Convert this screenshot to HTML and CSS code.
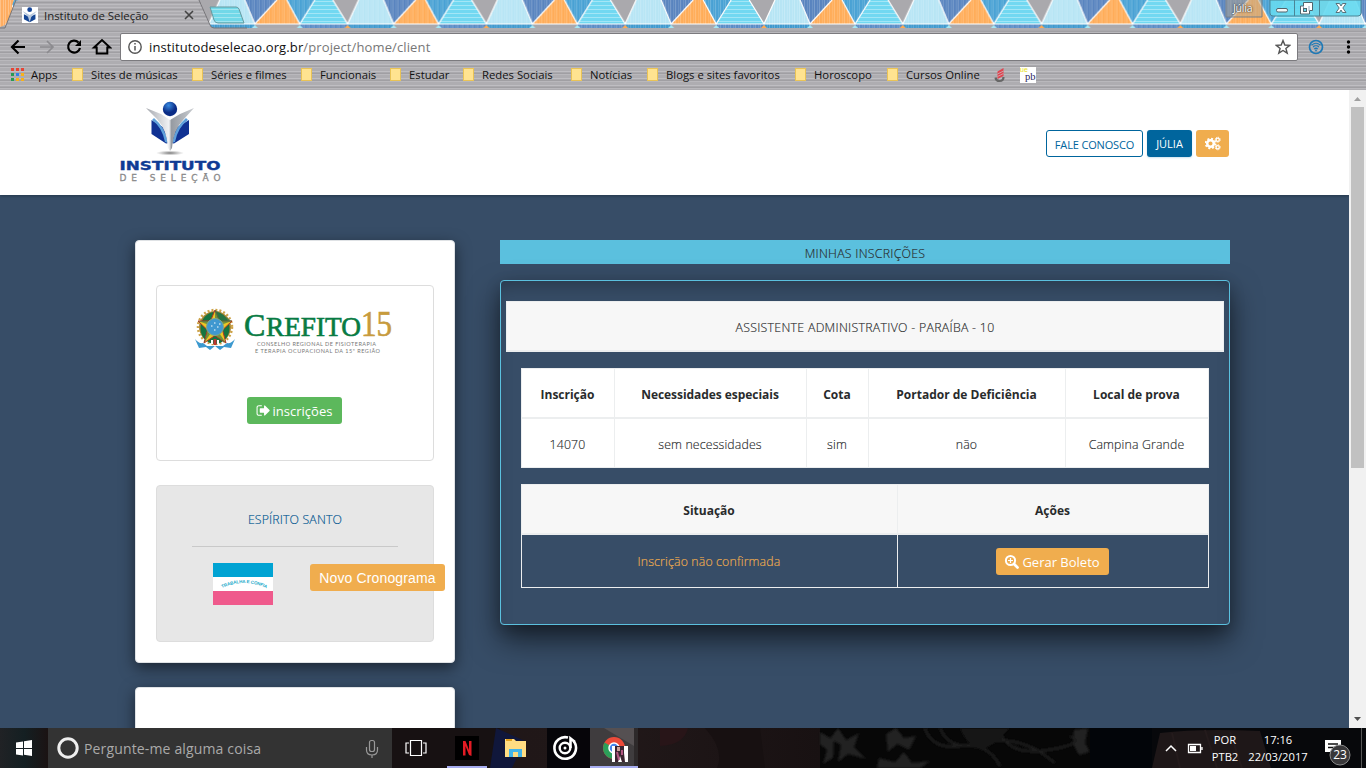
FILE: index.html
```html
<!DOCTYPE html>
<html lang="pt-BR">
<head>
<meta charset="utf-8">
<title>Instituto de Seleção</title>
<link rel="stylesheet" href="styles.css">
</head>
<body>
<header class="browser">
  <div class="titlebar">
    <svg class="theme" width="1366" height="30" viewBox="0 0 1366 30">
      <defs>
        <pattern id="vlines" width="5" height="30" patternUnits="userSpaceOnUse"><path d="M.5 0V30M3.500 0V30" stroke="#fff" stroke-opacity=".25"/></pattern>
        <pattern id="hlines" width="20" height="4" patternUnits="userSpaceOnUse"><path d="M0 1.500H20" stroke="#fff" stroke-opacity=".35"/></pattern>
        <pattern id="tri" x="70" width="138.800" height="28" patternUnits="userSpaceOnUse">
          <path d="M11 0H36L46 24H0Z" fill="#b4e4f4"/><path d="M36 0H68L46 24Z" fill="#527fbc"/>
          <path d="M68 0H78L91 24H46Z" fill="#ffa952"/><path d="M78 0H106L91 24Z" fill="#429ed2"/>
          <path d="M0 24H46V28H0Z" fill="#3795cc"/>
          <path d="M0 0H138.800V28H0Z" fill="url(#vlines)"/>
          <path d="M106 0H124L138.800 24H91Z" fill="#72d8f1"/><path d="M106 0H124L138.800 24H91Z" fill="url(#hlines)"/>
          <path d="M91 24H138.800V28H91Z" fill="#5488c4"/><path d="M91 24H138.800V28H91Z" fill="url(#vlines)"/>
          <path d="M124 0H138.800V24ZM0 0H11L0 24Z" fill="#aaa9ad"/><path d="M46 24H91V28H46Z" fill="#aaa9ad"/>
          <path d="M11 0L0 24M36 0L46 24L68 0M78 0L91 24L106 0M124 0L138.800 24M0 24H138.800" fill="none" stroke="#fff" stroke-width="1.200"/>
          <path d="M0 25l3 3H0ZM138.800 25l-3 3h3Z" fill="#ffa952"/><path d="M46 25l3 3h-6ZM91 25l3 3h-6Z" fill="#a5e7f5"/>
        </pattern>
        <pattern id="metal" width="30" height="7" patternUnits="userSpaceOnUse"><path fill="#aeadb1" d="M0 0H30V7H0Z"/><path d="M0 .5H30M0 4.500H30" stroke="#bdbcc0"/><path d="M0 2.500H30" stroke="#9f9ea2"/></pattern>
      </defs>
      <path d="M0 0H1366V28H0Z" fill="url(#tri)"/>
      <path d="M0 0H14L5 25L0 27Z" fill="#ffad61"/><path d="M0 0H14L5 25L0 27Z" fill="url(#vlines)"/>
      <path d="M0 28H1366V30H0Z" fill="#aeadb1"/>
      <path d="M5 28L15 3Q16 0 19 0H197Q200 0 201 3L210 25Q211 28 214 28Z" fill="url(#metal)"/>
      <path d="M0 28H5L16 0M199 0L210 25Q211 28 214 28H247" fill="none" stroke="#77767a"/>
      <path d="M210 7H236Q238 7 239 9L244 23H218Q215 23 214 20Z" fill="#72d8e8"/><path d="M210 7H236Q238 7 239 9L244 23H218Q215 23 214 20Z" fill="url(#hlines)" stroke="#65999f"/>
      <path d="M1226 -2h36v19h-36z" fill="#b4a58d" fill-opacity=".5" stroke="#77808a"/>
      <path d="M1270 0V13Q1270 16 1273 16H1358Q1361 16 1361 13V0Z" fill="#67d9ef" fill-opacity=".9" stroke="#4b8596"/>
      <path d="M1294.500 0V16M1319.500 0V16" stroke="#4b8596"/>
      <rect x="1276.500" y="8.500" width="11" height="3.500" rx="1.500" fill="#f4f8f8" stroke="#53636a"/>
      <path d="M1303.500 2.500h9v8h-3v3.500h-9v-8h3z" fill="#fff" stroke="#50656d"/><path d="M1303.500 6V8M1309 6V11" stroke="#9ab"/><rect x="1303.500" y="8.500" width="3" height="3" fill="#67d9ef" stroke="#50656d"/>
      <path d="M1336 3.500h3.500l1.500 2.500 1.500-2.500h3.500l-3.200 4.500 3.200 4.500h-3.500l-1.500-2.500-1.500 2.500h-3.500l3.200-4.500z" fill="#fff" stroke="#50656d" stroke-width=".9"/>
    </svg>
    <div class="tab">
      <svg width="16" height="16" viewBox="0 0 100 100"><path fill="#fff" d="M0 0H100V100H0Z"/><circle cx="48" cy="17" r="15" fill="#174698"/><path d="M12 45L48 62L84 45V76L48 96L12 76Z" fill="#174795"/><path d="M3 25L48 50L93 25L58 62L48 96L38 62Z" fill="#b9c9dd"/></svg>
      <span class="tabname">Instituto de Seleção</span>
      <svg width="10" height="10" viewBox="0 0 10 10"><path d="M1 1L9 9M9 1L1 9" stroke="#444" stroke-width="1.600"/></svg>
    </div>
    <span class="profile">Júlia</span>
  </div>
  <div class="toolbar">
    <svg class="nav" width="112" height="28" viewBox="0 0 112 28" fill="none" stroke-width="2.200">
      <path d="M25 14H12M18.500 7.500L12 14l6.500 6.500" stroke="#000"/><path d="M40 14H53M47 8l6 6-6 6" stroke="#8c8b8f" stroke-width="1.700"/>
      <path d="M78.500 9.500A6 6 0 1 0 80 15" stroke="#000"/><path d="M81 7v6h-6z" fill="#000"/>
      <path d="M94 14.500L102 7l8 7.500h-2.700V20.500H96.700V14.500Z" stroke="#000" stroke-width="2"/>
    </svg>
    <div class="omnibox">
      <svg width="16" height="16" viewBox="0 0 16 16" fill="none" stroke="#555"><circle cx="8" cy="8" r="6.200" stroke-width="1.400"/><path d="M8 7v4.500M8 4v1.600" stroke-width="1.500"/></svg>
      <span class="url">institutodeselecao.org.br<i>/project/home/client</i></span>
      <svg class="star" width="16" height="16" viewBox="0 0 16 16"><path d="M8 1.500L9.800 6L14.700 6.300L10.900 9.400L12.200 14.200L8 11.500L3.800 14.200L5.100 9.400L1.300 6.300L6.200 6Z" fill="none" stroke="#555" stroke-width="1.400"/></svg>
    </div>
    <svg width="16" height="16" viewBox="0 0 16 16" fill="none" stroke="#1e79b6"><circle cx="8" cy="8" r="6.500" stroke-width="1.700"/><path d="M3.500 6Q8 2.500 12.500 6M5 8Q8 5.500 11 8M6.300 10Q8 8.500 9.700 10" stroke-width="1.200"/><circle cx="8" cy="11.500" r=".6"/></svg>
    <svg class="dots" width="5" height="16" viewBox="0 0 5 16"><circle cx="2.500" cy="3" r="1.700"/><circle cx="2.500" cy="8" r="1.700"/><circle cx="2.500" cy="13" r="1.700"/></svg>
  </div>
  <nav class="bookmarks">
    <svg width="13" height="13" viewBox="0 0 13 13"><path fill="#e64435" d="M0 0h3v3H0zM5 0h3v3H5zM10 0h3v3h-3z"/><path fill="#279b52" d="M0 5h3v3H0zM0 10h3v3H0z"/><path fill="#3280e7" d="M5 5h3v3H5z"/><path fill="#f7b11b" d="M10 5h3v3h-3zM5 10h3v3H5zM10 10h3v3h-3z"/></svg>
    <span class="b0">Apps</span>
    <b></b><span class="b1">Sites de músicas</span>
    <b></b><span class="b2">Séries e filmes</span>
    <b></b><span class="b3">Funcionais</span>
    <b></b><span class="b4">Estudar</span>
    <b></b><span class="b5">Redes Sociais</span>
    <b></b><span class="b6">Notícias</span>
    <b></b><span class="b7">Blogs e sites favoritos</span>
    <b></b><span class="b8">Horoscopo</span>
    <b></b><span class="b9">Cursos Online</span>
    <svg class="red" width="12" height="16" viewBox="0 0 12 16"><path d="M3.500 4.500L9.500 1V9L3.500 12Z" fill="#e04450"/><path d="M3.500 7L9.500 4M3.500 9.500L9.500 6.500" stroke="#c5b5b9" stroke-width=".8"/><path d="M1.500 10.500Q2 14 5.500 14Q9.500 14 9.500 10" fill="none" stroke="#666" stroke-width="2.200"/></svg>
    <svg width="16" height="16" viewBox="0 0 16 16"><path fill="#fff" d="M0 0H16V16H0Z"/><text x="0" y="5" font-family="Liberation Sans" font-size="7" fill="#e8df16">ue</text><text x="5" y="13" font-family="Liberation Serif" font-size="10.500" fill="#28235e">pb</text></svg>
  </nav>
</header>

<div class="viewport">
  <div class="page">
    <header class="sitehead">
      <svg class="brand" width="104" height="86" viewBox="0 0 104 86">
        <defs>
          <radialGradient id="ball" cx=".4" cy=".25"><stop stop-color="#378ae0"/><stop offset="1" stop-color="#0b2c86"/></radialGradient>
          <linearGradient id="body"><stop stop-color="#a5a8ae"/><stop offset=".48" stop-color="#f1f2f4"/><stop offset=".53" stop-color="#969ba2"/><stop offset="1" stop-color="#c9ccd0"/></linearGradient>
          <radialGradient id="shade"><stop stop-color="#777"/><stop offset="1" stop-color="#999" stop-opacity="0"/></radialGradient>
        </defs>
        <ellipse cx="52" cy="53" rx="14" ry="2.500" fill="url(#shade)"/>
        <path d="M33.500 20L51 31V43L48 43.500L33.500 34ZM71 20L53 31V43L56 43.500L71 34Z" fill="#103193"/>
        <path d="M36 18Q47 27 50 43L47 42Q44 27 34 20ZM68 18Q57 27 54 43L57 42Q60 27 70 20Z" fill="#5fa0db"/>
        <path d="M28 8L43 14L52 20L62 14L76 8L66 19Q55 30 54 48L52 51L50 48Q49 30 39 19Z" fill="url(#body)"/>
        <circle cx="52" cy="9" r="7.200" fill="url(#ball)"/>
        <text class="logo1" x="1.500" y="70" textLength="101" lengthAdjust="spacingAndGlyphs">INSTITUTO</text>
        <text class="logo2" x="1.500" y="80.500" textLength="101">DE SELEÇÃO</text>
      </svg>
      <div class="actions"><a class="contact">FALE CONOSCO</a><a class="user">JÚLIA</a><a class="gear">
        <svg width="16" height="15" viewBox="0 0 16 15" fill="none" stroke="#fff"><circle cx="5.500" cy="7.500" r="3.300" stroke-width="2.500"/><circle cx="5.500" cy="7.500" r="4.900" stroke-width="1.700" stroke-dasharray="2 1.850"/><circle cx="12.700" cy="3.700" r="1.600" stroke-width="1.300"/><circle cx="12.700" cy="3.700" r="2.500" stroke-width="1" stroke-dasharray="1.200 .76"/><circle cx="12.700" cy="11.300" r="1.600" stroke-width="1.300"/><circle cx="12.700" cy="11.300" r="2.500" stroke-width="1" stroke-dasharray="1.200 .76"/></svg></a></div>
    </header>
    <main class="content">
      <aside class="side">
        <section class="card first">
          <div class="council">
            <svg class="crefito" width="202" height="52" viewBox="0 0 202 52">
              <circle cx="21" cy="22" r="16" fill="#a28336"/><circle cx="21" cy="22" r="17" fill="none" stroke="#cda348" stroke-width="2.500" stroke-dasharray="2 2"/>
              <ellipse cx="21" cy="23" rx="14.500" ry="16" fill="#167440"/>
              <path d="M21 5L25.500 16L38 16L28.500 25L32 38L21 30.500L10 38L13.500 25L4 16H16.500Z" fill="#edc724" stroke="#b33426"/>
              <path d="M21 5V22L38 16ZM21 22L32 38L21 30ZM21 22L10 38L14 25ZM21 22L4 16H16Z" fill="#307748" opacity=".65"/>
              <circle cx="21" cy="22" r="8.500" fill="#4098d0" stroke="#7fa88a"/><path d="M17 21h1.500M20 18h1.500M23 22h1.500M20 25h1.500M25 19h1.500" stroke="#fff"/>
              <path d="M1 34Q5 39 9 38L13 41H29L33 38Q37 39 41 34L37 43L30 42L26 45L21 41L16 45L12 42L5 43Z" fill="#3c99cf"/><path d="M18 35V39M24 35V39" stroke="#fff" stroke-width="2"/><path d="M21 34V40" stroke="#bb3932" stroke-width="3"/>
              <text class="cf" x="50" y="30.500" font-size="32">C</text><text class="cf" x="72" y="30.500" font-size="27" textLength="95" lengthAdjust="spacingAndGlyphs">REFITO</text><text class="cf gold" x="167" y="30.500" font-size="36" textLength="31" lengthAdjust="spacingAndGlyphs">15</text>
              <text class="sub" x="63" y="40.500" textLength="119">CONSELHO REGIONAL DE FISIOTERAPIA</text><text class="sub" x="61" y="47.500" textLength="125">E TERAPIA OCUPACIONAL DA 15ª REGIÃO</text>
            </svg>
            <a class="btn green"><svg width="15" height="15" viewBox="0 0 1792 1792"><path fill="#fff" d="M704 1440q0 96-32 96H352q-119 0-203-85T64 1248V544q0-119 85-203t203-85h320q32 0 32 96 0 32-32 32H352q-66 0-113 47t-47 113v704q0 66 47 113t113 47h320q32 0 32 32zm928-544q0 26-19 45l-544 544q-19 19-45 19t-45-19-19-45v-288H512q-26 0-45-19t-19-45V704q0-26 19-45t45-19h448V352q0-26 19-45t45-19 45 19l544 544q19 19 19 45z"/></svg>inscrições</a>
          </div>
          <div class="state">
            <h3>ESPÍRITO SANTO</h3>
            <div class="staterow">
              <svg width="60" height="42" viewBox="0 0 60 42"><path fill="#00a3d3" d="M0 0H60V14H0Z"/><path fill="#fff" d="M0 14H60V28H0Z"/><path fill="#ef5a8c" d="M0 28H60V42H0Z"/><path id="arc" d="M9 25Q31 15 53 25" fill="none"/><text class="motto" textLength="46"><textPath href="#arc">TRABALHA E CONFIA</textPath></text></svg>
              <a class="btn schedule">Novo Cronograma</a>
            </div>
          </div>
        </section>
        <section class="card second"></section>
      </aside>
      <section class="main">
        <h2>MINHAS INSCRIÇÕES</h2>
        <div class="panel">
          <div class="role">ASSISTENTE ADMINISTRATIVO - PARAÍBA - 10</div>
          <div class="grid g5">
            <strong>Inscrição</strong><strong class="t2">Necessidades especiais</strong><strong>Cota</strong><strong class="t3">Portador de Deficiência</strong><strong>Local de prova</strong>
            <span>14070</span><span>sem necessidades</span><span>sim</span><span>não</span><span>Campina Grande</span>
          </div>
          <div class="grid g2">
            <strong>Situação</strong><strong>Ações</strong>
            <span class="pending">Inscrição não confirmada</span><span class="act"><a class="btn slip"><svg width="15" height="15" viewBox="0 0 15 15" fill="none" stroke="#fff"><circle cx="6.500" cy="6.500" r="4.600" stroke-width="2"/><path d="M10 10l3.500 3.500" stroke-width="2.700" stroke-linecap="round"/><path d="M4 6.500h5M6.500 4v5" stroke-width="1.200"/></svg>Gerar Boleto</a></span>
          </div>
        </div>
      </section>
    </main>
  </div>
  <div class="scroll"><svg width="17" height="638" viewBox="0 0 17 638"><path d="M5 11l3.500-4L12 11Z" fill="#a0a0a0"/><path d="M2 17H15V378H2Z" fill="#c1c1c1"/><path d="M5 627h7l-3.500 4Z" fill="#505050"/></svg></div>
</div>

<footer class="taskbar">
  <svg class="wall" width="1366" height="40" viewBox="0 0 1366 40">
    <defs><linearGradient id="tb"><stop stop-color="#202225"/><stop offset=".03" stop-color="#141f22"/><stop offset=".06" stop-color="#1b1212"/><stop offset=".75" stop-color="#211819"/><stop offset="1" stop-color="#181112"/></linearGradient>
    <filter id="soft"><feGaussianBlur stdDeviation="1.200"/></filter></defs>
    <path fill="#07080b" d="M0 0H1366V40H0Z"/><path fill="url(#tb)" d="M0 0H820V40H0Z"/>
    <path d="M660 0H688Q684 17 660 18Z" fill="#281518"/><path d="M705 0Q725 22 717 40H765L760 0Z" fill="#171011"/>
    <path d="M820 0H1090V40H820Z" fill="#070707"/>
    <g filter="url(#soft)"><path d="M820 4l14 8-1 18-10 6 4-14-7-6zM838 0l8 12 13-7-5 14 12 12-18-5-10 8 3-17-11-6zM879 30l16 4 9-10 8 11 18-2-9 7h-44zM896 0l8 10 12-2-7 14-12-6-9 8-2-18zM1074 2l14-2-3 15 5 9-11 3-6-11z" fill="#222"/>
    <path d="M925 0Q932 22 960 18T1000 38M940 0Q950 25 985 15T1055 35M1000 5Q1010 28 1048 22T1070 8" fill="none" stroke="#1a1a1a" stroke-width="3"/><path d="M960 0Q975 35 1000 10L1010 0Z" fill="#191919"/></g>
    <path d="M1090 0H1152V40H1090Z" fill="#020509"/><path d="M1160 5Q1200 0 1260 3L1271 40H1152Z" fill="#1e1718"/><path d="M1172 5l8 35M1205 2l12 38M1230 4l12 36" stroke="#241b1c" stroke-width="2"/>
    <path d="M392 0H500V40H392Z" fill="#171112"/><path d="M496 0L525 13L512 40H490Z" fill="#10173b"/><path d="M547 0H590V40H547Z" fill="#060509"/>
    <path d="M590 0H634V40H590Z" fill="#3f3c3e"/><path d="M604 0L634 18V0Z" fill="#555052"/><path d="M634 0h4v40h-4z" fill="#2d292a"/>
    <path d="M48 0H392V40H48Z" fill="#333"/>
    <g fill="#fff"><path d="M16 14.500L23 13.500V20H16ZM24 13.300L32 12V20H24ZM16 21H23V27.500L16 26.500ZM24 21H32V28L24 26.700Z"/></g>
    <circle cx="68" cy="20" r="9.200" fill="none" stroke="#eee" stroke-width="3"/>
    <g fill="none" stroke="#999" stroke-width="1.200"><rect x="369.500" y="12.500" width="5" height="11" rx="2"/><path d="M366.500 19v3q0 5 5.500 5t5.500-5v-3M372 27v3"/></g>
    <g fill="none" stroke="#fff" stroke-width="1.200"><path d="M410.500 12.500h11v15h-11zM409 15h-3v10h3M423 15h3v10h-3"/></g>
    <path d="M455 8H479V32H455Z" fill="#000"/><path d="M463 13H465.500L469 22V13H471.500V28L469 27L465.500 18V27.500H463Z" fill="#e31b24"/>
    <path d="M447 38H487V40H447ZM590 38H638V40H590Z" fill="#a7adf0"/>
    <path d="M505 11H514L516 13H526V29H505Z" fill="#ffdc82"/><path d="M509 21H522V29H518V24H513V29H509Z" fill="#43b4e9"/><path d="M506 12h6" stroke="#e4a21e" stroke-width="2"/>
    <path d="M568 9.500A10.800 10.800 0 1 0 573.500 13" fill="none" stroke="#fff" stroke-width="2.600"/><path d="M570.500 20V10.500l4.500 3.500" fill="none" stroke="#fff" stroke-width="2.600"/><circle cx="565" cy="20" r="5.300" fill="none" stroke="#fff" stroke-width="2.400"/><circle cx="565" cy="20" r="1.500" fill="#fff"/>
    <circle cx="614" cy="20" r="11" fill="#ec4a39"/><path d="M614 20L604.500 14.500A11 11 0 0 0 614 31L619 23Z" fill="#2b9f59"/><path d="M618 18H625A11 11 0 0 1 614 31L619 22Z" fill="#f6c732"/><circle cx="614" cy="20" r="5" fill="#4685ed" stroke="#fff" stroke-width="1.500"/>
    <path d="M612 18H628V34H612Z" fill="#fff"/><path d="M615 18h9v7l1 9h-3l-2-6-2 6h-3z" fill="#3b2430"/><path d="M617 24l2 8M622 22v5" stroke="#b05680" stroke-width="2"/><path d="M617 19h3v4h-3z" fill="#cfa39a"/>
    <path d="M1166 23l5-5 5 5" fill="none" stroke="#fff" stroke-width="1.500"/><path d="M1188.500 16.500h12v8h-12zM1202 19v3" fill="none" stroke="#fff" stroke-width="1.300"/><path d="M1190 18h6v5h-6z" fill="#fff"/>
    <path d="M1325 12H1341V24H1333L1330 27V24H1325Z" fill="#fff"/><path d="M1328 16H1338M1328 19.500H1338" stroke="#111" stroke-width="1.300"/><circle cx="1340" cy="27" r="10" fill="#39383a" stroke="#898989"/>
    <path d="M1361.500 0V40" stroke="#555"/>
  </svg>
  <span class="ask">Pergunte-me alguma coisa</span>
  <span class="lang">POR<br>PTB2</span><time>17:16<br>22/03/2017</time><span class="count">23</span>
</footer>
</body>
</html>
```
FILE: styles.css
```css
* { box-sizing: border-box; }
body { margin: 0; width: 1366px; height: 768px; overflow: hidden; display: flex; flex-direction: column; font-family: "Open Sans", "Noto Sans", sans-serif; font-size: 12px; color: #292b2c; }
svg { flex: none; display: block; }
.browser { flex: none; height: 90px; background: repeating-linear-gradient(#aeadb1 0 1px, #bfbec2 1px 2px, #aaa9ad 2px 3px, #a09fa3 3px 4px, #b9b8bc 4px 5px, #aeadb1 5px 7px); }
.titlebar { height: 30px; position: relative; display: flex; justify-content: space-between; }
.theme { position: absolute; inset: 0; }
.tab { position: relative; display: flex; align-items: center; height: 30px; padding-left: 22px; width: 205px; font-size: 11.400px; }
.tabname { margin-left: 6px; width: 140px; white-space: nowrap; color: #222; }
.profile { position: relative; margin-right: 111px; width: 22px; font-size: 10.500px; line-height: 17px; color: #fff; text-shadow: 0 0 1px #333, 0 0 2px #333; letter-spacing: -.2px; }
.toolbar { height: 34px; display: flex; align-items: center; }
.nav { margin-right: 8px; }
.omnibox { height: 28px; width: 1178px; background: #fff; border: 1px solid #7b7a7e; border-radius: 2px; display: flex; align-items: center; padding: 0 6px; margin-right: 10px; }
.url { margin-left: 6px; font-size: 13px; letter-spacing: .12px; color: #111; }
.url i { font-style: normal; color: #777; }
.star { margin-left: auto; }
.dots { margin-left: 22px; }
.bookmarks { height: 24px; display: flex; align-items: center; padding: 0 0 3px 11px; font-size: 11.300px; color: #111; white-space: nowrap; }
.bookmarks b { width: 11px; height: 13px; background: #ffe390; border: 1px solid #e9c356; margin-right: 8px; flex: none; }
.bookmarks span { flex: none; }
.b0 { margin-left: 7px; width: 41px; }
.b1 { width: 101px; }
.b2 { width: 90px; }
.b3 { width: 70px; }
.b4 { width: 54px; }
.b5 { width: 89px; }
.b6 { width: 57px; }
.b7 { width: 129px; }
.b8 { width: 73px; }
.b9 { width: 88px; }
.red { margin-right: 14px; }
.viewport { height: 638px; flex: none; display: flex; overflow: hidden; }
.page { width: 1349px; background: #374d67; }
.scroll { width: 17px; background: #f1f1f1; }
.sitehead { height: 105px; background: #fff; display: flex; justify-content: space-between; padding: 10px 120px 0 118px; box-shadow: 0 1px 3px #24374a; }
.logo1 { font: bold 13px "DejaVu Sans", sans-serif; fill: #103b94; stroke: #103b94; stroke-width: .4; }
.logo2 { font: 9px "DejaVu Sans", sans-serif; fill: #8b8b8b; stroke: #8b8b8b; stroke-width: .3; }
.actions { display: flex; gap: 4px; padding-top: 30px; }
.actions a { height: 27px; line-height: 28px; border-radius: 3px; font-size: 11px; text-align: center; }
.contact { width: 97px; border: 1px solid #00659d; color: #00659d; letter-spacing: -.15px; }
.actions .contact { line-height: 27px; }
.user { width: 45px; background: #00659d; color: #fff; box-shadow: 0 1px 2px #cce2ef; }
.gear { width: 33px; background: #f0ad4e; padding: 6px 9px; }
.content { display: flex; gap: 45px; padding: 45px 0 0 135px; align-items: flex-start; }
.side { width: 320px; flex: none; display: flex; flex-direction: column; gap: 24px; }
.card { background: #fff; border: 1px solid #dfe2e5; border-radius: 4px; box-shadow: 0 5px 15px rgba(0,0,0,.5); }
.first { height: 423px; padding: 44px 20px 20px; display: flex; flex-direction: column; gap: 24px; }
.second { height: 200px; }
.council { height: 176px; border: 1px solid #ddd; border-radius: 4px; display: flex; flex-direction: column; align-items: center; padding-top: 19px; }
.crefito { margin-bottom: 40px; }
.cf { font-family: "Liberation Serif", serif; fill: #087b43; stroke: #087b43; stroke-width: .6; }
.gold { fill: #c79b3d; stroke: #c79b3d; }
.sub { font: 5.500px Lato, sans-serif; fill: #777; }
.btn { display: flex; align-items: center; justify-content: center; height: 27px; border-radius: 3px; color: #fff; background: #f0ad4e; font-size: 13px; white-space: nowrap; }
.green { width: 95px; background: #5cb85c; gap: 2px; padding-right: 1px; margin-right: 1px; }
.state { height: 157px; background: #e7e7e7; border: 1px solid #ddd; border-radius: 4px; padding: 22px 0 0 35px; }
.state h3 { margin: 0; width: 206px; height: 39px; border-bottom: 1px solid #c9c9c9; text-align: center; font-size: 12.300px; line-height: 24px; font-weight: 300; color: #00558f; letter-spacing: .15px; -webkit-text-stroke: .15px; }
.staterow { display: flex; gap: 37px; padding: 16px 0 0 21px; align-items: flex-start; }
.schedule { width: 135px; flex: none; font: 14px "Liberation Sans", sans-serif; letter-spacing: .14px; margin-top: 1px; }
.motto { font: bold 4.500px "Liberation Sans", sans-serif; fill: #21a9ca; }
.main { width: 730px; flex: none; }
.main h2 { margin: 0 0 16px; height: 24px; background: #5bc0de; text-align: center; font-size: 12.300px; line-height: 27px; font-weight: 300; letter-spacing: .28px; -webkit-text-stroke: .15px; }
.panel { height: 345px; border: 1px solid #5bc0de; border-radius: 4px; padding: 20px 5px; box-shadow: 0 15px 30px rgba(0,0,0,.55), 0 5px 15px rgba(0,0,0,.2), inset 0 15px 25px -15px rgba(0,0,0,.4); }
.role { height: 51px; background: #f7f7f7; border: 1px solid #eceeef; border-bottom-width: 2px; line-height: 51px; text-align: center; font-size: 12.300px; font-weight: 300; letter-spacing: .3px; -webkit-text-stroke: .15px; }
.grid { display: grid; margin: 16px 15px 0; gap: 1px; border: 1px solid #eceeef; text-align: center; background: #eceeef; }
.grid strong, .grid span { display: flex; align-items: center; justify-content: center; background: #fff; padding: 2px 1px 0 0; }
.grid strong { border-bottom: 1px solid #eceeef; font-weight: 700; }
.grid span { font-size: 12.300px; font-weight: 300; letter-spacing: .15px; -webkit-text-stroke: .15px; }
.g5 { height: 100px; grid-template-columns: 92px 191px 61px 196px 1fr; grid-template-rows: 49px 1fr; }
.grid .t2 { letter-spacing: -.05px; }
.g2 { height: 104px; grid-template-columns: 375px 1fr; grid-template-rows: 49px 1fr; }
.g2 strong { background: #f7f7f7; }
.g2 span { background: #374d67; }
.g2 .pending { color: #f0ad4e; padding-top: 0; }
.g2 .act { padding-top: 1px; padding-right: 2px; -webkit-text-stroke: 0; letter-spacing: 0; }
.slip { width: 113px; gap: 3px; font-weight: 400; }
.taskbar { height: 40px; flex: none; position: relative; display: flex; align-items: center; color: #fff; }
.wall { position: absolute; inset: 0; }
.taskbar span, .taskbar time { position: relative; }
.ask { color: #aaa; font-size: 14px; letter-spacing: .15px; margin-left: 84px; width: 1120px; }
.lang, .taskbar time { font-size: 11.200px; line-height: 17px; text-align: center; }
.lang { width: 42px; }
.taskbar time { width: 64px; }
.count { margin: 12px 0 0 20px; width: 20px; text-align: center; font-size: 12px; }
```
